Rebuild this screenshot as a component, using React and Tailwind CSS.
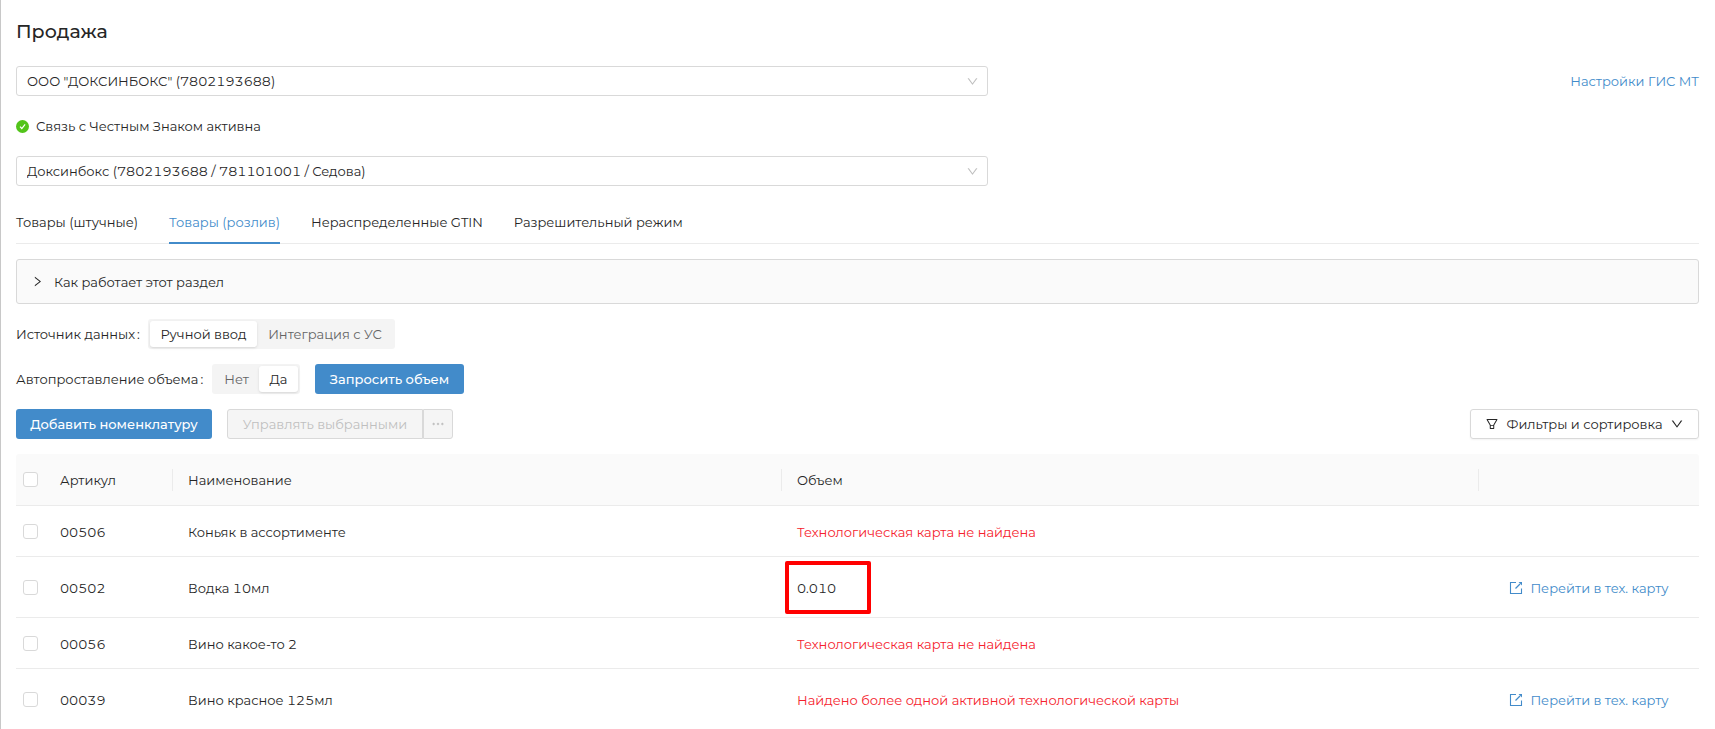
import React from 'react';
import { AiOutlineDown, AiOutlineEllipsis, AiOutlineFilter, AiOutlineRight } from 'react-icons/ai';

const tabs = [
    { label: 'Товары (штучные)' },
    { label: 'Товары (розлив)', active: true },
    { label: 'Нераспределенные GTIN' },
    { label: 'Разрешительный режим' },
];

const rows = [
    { code: '00506', name: 'Коньяк в ассортименте', error: 'Технологическая карта не найдена' },
    { code: '00502', name: 'Водка 10мл', volume: '0.010', link: true },
    { code: '00056', name: 'Вино какое-то 2', error: 'Технологическая карта не найдена' },
    { code: '00039', name: 'Вино красное 125мл', error: 'Найдено более одной активной технологической карты', link: true },
];

const Select = ({ label, value }) => (
    <div className="grid h-[30px] items-center">
        <select
            aria-label={label}
            className="col-start-1 row-start-1 h-[30px] w-full appearance-none rounded-[3px] border border-[#d9d9d9] bg-white px-2.5"
        >
            <option>{value}</option>
        </select>
        <AiOutlineDown className="pointer-events-none col-start-1 row-start-1 mr-[9px] justify-self-end text-[13px] text-[#bfbfbf]" />
    </div>
);

const Segmented = ({ options, value, label }) => (
    <div role="group" aria-label={label} className="flex h-[30px] rounded-[3px] bg-[#f4f4f4] p-0.5">
        {options.map((option) => (
            <button
                key={option.label}
                type="button"
                aria-pressed={option.label === value}
                className={`h-[26px] whitespace-nowrap rounded-[3px] ${option.width} ${
                    option.label === value ? 'bg-white text-[#262626] shadow-sm' : 'text-[#646464]'
                }`}
            >
                {option.label}
            </button>
        ))}
    </div>
);

const Checkbox = ({ label }) => (
    <input
        type="checkbox"
        aria-label={label}
        className="block size-[15px] appearance-none rounded-[3px] border border-[#d9d9d9] bg-white checked:bg-[#428bca]"
    />
);

const SuccessIcon = () => (
    <svg viewBox="0 0 13 13" className="size-[13px]" fill="none" aria-hidden="true">
        <circle cx="6.5" cy="6.5" r="6.5" fill="#52c41a" />
        <path d="M4 6.6l1.8 1.9L9.1 4.3" stroke="#fff" strokeWidth="1.2" />
    </svg>
);

const ExternalIcon = () => (
    <svg viewBox="0 0 14 14" className="size-3.5" fill="none" stroke="currentColor" aria-hidden="true">
        <path d="M7 1.5H1.5v11h11v-5" strokeWidth="1.1" />
        <path d="M6.5 7.5l4.5-4.5" strokeWidth="1.3" />
        <path d="M9.5 1H13v3.5z" fill="currentColor" stroke="none" />
    </svg>
);

const ProductTable = () => (
    <table className="mt-[15px] w-full table-fixed border-separate border-spacing-0 text-left">
        <colgroup>
            <col className="w-[29px]" />
            <col className="w-32" />
            <col className="w-[609px]" />
            <col />
            <col className="w-[220px]" />
        </colgroup>
        <thead>
            <tr className="h-[52px] bg-[#fafafa]">
                <th className="rounded-tl-[3px] border-b border-[#ebebeb] pl-[7px]"><Checkbox label="Выбрать все" /></th>
                <th className="border-b border-[#ebebeb] font-normal">
                    <div className="h-[22px] border-r border-[#ebebeb] px-[15px]">Артикул</div>
                </th>
                <th className="border-b border-[#ebebeb] font-normal">
                    <div className="h-[22px] border-r border-[#ebebeb] px-[15px]">Наименование</div>
                </th>
                <th className="border-b border-[#ebebeb] font-normal">
                    <div className="h-[22px] border-r border-[#ebebeb] px-[15px]">Объем</div>
                </th>
                <td className="rounded-tr-[3px] border-b border-[#ebebeb]" />
            </tr>
        </thead>
        <tbody>
            {rows.map((row) => (
                <tr key={row.code} className={row.link ? 'h-[61px]' : 'h-[51px]'}>
                    <td className="border-b border-[#ebebeb] pl-[7px]"><Checkbox label={`Выбрать ${row.name}`} /></td>
                    <td className="border-b border-[#ebebeb] px-[15px] pt-0.5">{row.code}</td>
                    <td className="border-b border-[#ebebeb] px-[15px] pt-0.5">{row.name}</td>
                    <td className="relative border-b border-[#ebebeb] px-[15px] pt-0.5">
                        {row.error ? <span className="text-[#f5222d]">{row.error}</span> : row.volume}
                        {row.volume && (
                            <span className="absolute left-[3px] top-1 h-[53px] w-[86px] rounded-[2px] border-4 border-[#ff0000]" />
                        )}
                    </td>
                    <td className="border-b border-[#ebebeb] pt-0.5">
                        {row.link && (
                            <a href="#" className="flex items-center justify-center gap-[7px] whitespace-nowrap text-[#428bca]">
                                <ExternalIcon />
                                Перейти в тех. карту
                            </a>
                        )}
                    </td>
                </tr>
            ))}
        </tbody>
    </table>
);

const App = () => (
    <main className="min-h-screen border-l border-[#c8c8c8] bg-white pl-[15px] pr-4 pt-4 font-[Montserrat,Inter,sans-serif] text-[13px] leading-[22px] tabular-nums text-[#262626]">
        <h1 className="text-[19px] leading-8 font-medium">Продажа</h1>

        <div className="mt-[18px] grid grid-cols-12 items-center gap-x-6">
            <div className="col-span-7"><Select label="Организация" value={'ООО "ДОКСИНБОКС" (7802193688)'} /></div>
            <a href="#" className="col-span-5 justify-self-end text-[#428bca]">Настройки ГИС МТ</a>
            <div className="col-span-12 my-[15px] flex h-[30px] items-center gap-[7px]">
                <SuccessIcon />
                Связь с Честным Знаком активна
            </div>
            <div className="col-span-7"><Select label="Точка продаж" value="Доксинбокс (7802193688 / 781101001 / Седова)" /></div>
        </div>

        <nav className="mt-[15px] flex h-[43px] gap-[31px] border-b border-[#ebebeb]">
            {tabs.map((tab) => (
                <button
                    key={tab.label}
                    type="button"
                    className={`h-[43px] whitespace-nowrap border-b-2 ${
                        tab.active ? 'border-[#428bca] text-[#428bca]' : 'border-transparent'
                    }`}
                >
                    {tab.label}
                </button>
            ))}
        </nav>

        <button type="button" className="mt-[15px] flex h-[45px] w-full items-center gap-2.5 rounded-[3px] border border-[#d9d9d9] bg-[#fafafa] px-3.5">
            <AiOutlineRight className="text-[13px]" />
            Как работает этот раздел
        </button>

        <div className="mt-[15px] flex items-center">
            <span className="w-[132px] whitespace-nowrap">Источник данных<span className="ml-0.5">:</span></span>
            <Segmented
                label="Источник данных"
                value="Ручной ввод"
                options={[{ label: 'Ручной ввод', width: 'w-[107px]' }, { label: 'Интеграция с УС', width: 'w-[136px]' }]}
            />
        </div>

        <div className="mt-[15px] flex items-center">
            <span className="w-[196px] whitespace-nowrap">Автопроставление объема<span className="ml-0.5">:</span></span>
            <Segmented
                label="Автопроставление объема"
                value="Да"
                options={[{ label: 'Нет', width: 'w-[45px]' }, { label: 'Да', width: 'w-[39px]' }]}
            />
            <button type="button" className="ml-[15px] h-[30px] w-[149px] whitespace-nowrap rounded-[3px] bg-[#428bca] font-medium text-white">
                Запросить объем
            </button>
        </div>

        <div className="mt-[15px] flex items-center">
            <button type="button" className="h-[30px] w-[196px] whitespace-nowrap rounded-[3px] bg-[#428bca] font-medium text-white">
                Добавить номенклатуру
            </button>
            <div className="ml-[15px] flex text-[#bfbfbf]">
                <button type="button" disabled className="h-[30px] w-[196px] whitespace-nowrap rounded-l-[3px] border border-[#d9d9d9] bg-[#f5f5f5]">
                    Управлять выбранными
                </button>
                <button type="button" disabled aria-label="Ещё" className="flex h-[30px] w-[30px] items-center justify-center rounded-r-[3px] border border-[#d9d9d9] bg-[#f5f5f5]">
                    <AiOutlineEllipsis className="text-base" stroke="currentColor" strokeWidth="40" />
                </button>
            </div>
            <button type="button" className="ml-auto flex h-[30px] w-[229px] items-center justify-center gap-[7px] whitespace-nowrap rounded-[3px] border border-[#d9d9d9] shadow-xs">
                <AiOutlineFilter className="text-sm" />
                Фильтры и сортировка
                <AiOutlineDown className="text-sm" />
            </button>
        </div>

        <ProductTable />
    </main>
);

export default App;
